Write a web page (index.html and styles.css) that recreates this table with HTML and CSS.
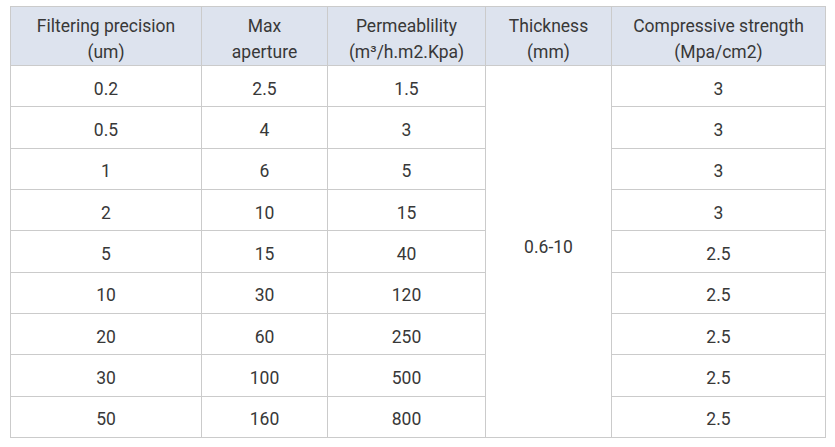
FILE: index.html
```html
<!DOCTYPE html>
<html>
<head>
<meta charset="utf-8">
<link rel="stylesheet" href="styles.css">
</head>
<body>
<table class="spec">
  <colgroup>
    <col class="c1"><col class="c2"><col class="c3"><col class="c4"><col class="c5">
  </colgroup>
  <thead>
    <tr>
      <th>Filtering precision<br>(um)</th>
      <th>Max<br>aperture</th>
      <th>Permeablility<br>(m³/h.m2.Kpa)</th>
      <th>Thickness<br>(mm)</th>
      <th>Compressive strength<br>(Mpa/cm2)</th>
    </tr>
  </thead>
  <tbody>
    <tr><td>0.2</td><td>2.5</td><td>1.5</td><td rowspan="9" class="thick">0.6-10</td><td>3</td></tr>
    <tr><td>0.5</td><td>4</td><td>3</td><td>3</td></tr>
    <tr><td>1</td><td>6</td><td>5</td><td>3</td></tr>
    <tr><td>2</td><td>10</td><td>15</td><td>3</td></tr>
    <tr><td>5</td><td>15</td><td>40</td><td>2.5</td></tr>
    <tr><td>10</td><td>30</td><td>120</td><td>2.5</td></tr>
    <tr><td>20</td><td>60</td><td>250</td><td>2.5</td></tr>
    <tr><td>30</td><td>100</td><td>500</td><td>2.5</td></tr>
    <tr><td>50</td><td>160</td><td>800</td><td>2.5</td></tr>
  </tbody>
</table>
</body>
</html>
```
FILE: styles.css
```css
html, body {
  margin: 0;
  padding: 0;
  background: #ffffff;
}
body {
  padding: 6px 0 0 10px;
  font-family: Roboto, "Noto Sans", "Liberation Sans", sans-serif;
  color: #383838;
}
.spec {
  border-collapse: collapse;
  table-layout: fixed;
  width: 815px;
  font-size: 17.5px;
}
.c1 { width: 191px; }
.c2 { width: 126px; }
.c3 { width: 158px; }
.c4 { width: 126px; }
.c5 { width: 214px; }
.spec th,
.spec td {
  border: 1px solid #cbcbcb;
  text-align: center;
  vertical-align: middle;
  padding: 0;
}
.spec th {
  background: #dde3ee;
  font-weight: 400;
  line-height: 26px;
  height: 52px;
  padding-top: 6px;
}
.spec td {
  height: 35.33px;
  line-height: 20px;
  padding-top: 5px;
}
.spec td.thick {
  padding-top: 0;
  padding-bottom: 8px;
}
```
